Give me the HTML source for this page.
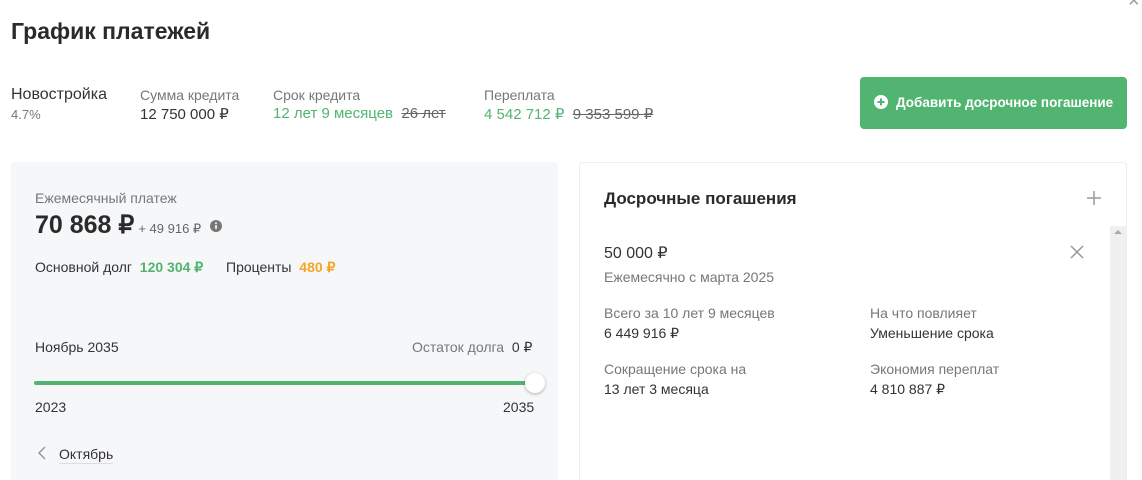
<!DOCTYPE html>
<html><head><meta charset="utf-8"><style>
*{margin:0;padding:0;box-sizing:border-box}
html,body{width:1142px;height:480px;overflow:hidden}
body{background:#fff;font-family:"Liberation Sans",sans-serif;color:#222;position:relative}
.a{position:absolute;white-space:nowrap}
.g{color:#52b471}.m{color:#777}.s{text-decoration:line-through;color:#666}
</style></head><body>
<div class="a" style="left:1128px;top:-10px;font-size:20px;color:#999">×</div>
<div class="a" style="left:11px;top:18px;font-size:23px;font-weight:bold;color:#2a2a2a">График платежей</div>

<div class="a" style="left:11px;top:86px;font-size:16px;color:#333">Новостройка</div>
<div class="a m" style="left:11px;top:107px;font-size:13px">4.7%</div>
<div class="a m" style="left:140px;top:87px;font-size:14px">Сумма кредита</div>
<div class="a" style="left:140px;top:105px;font-size:15px;color:#333">12 750 000 ₽</div>
<div class="a m" style="left:273px;top:87px;font-size:14px">Срок кредита</div>
<div class="a" style="left:273px;top:105px;font-size:15px"><span class="g">12 лет 9 месяцев</span>&nbsp; <span class="s">26 лет</span></div>
<div class="a m" style="left:484px;top:87px;font-size:14px">Переплата</div>
<div class="a" style="left:484px;top:105px;font-size:15px"><span class="g">4 542 712 ₽</span>&nbsp; <span class="s">9 353 599 ₽</span></div>

<div class="a" style="left:860px;top:77px;width:267px;height:52px;background:#52b471;border-radius:4px;color:#fff;font-size:13.5px;font-weight:bold;line-height:52px;padding-left:14px">
<svg width="14" height="14" viewBox="0 0 14 14" style="vertical-align:-2px;margin-right:8px"><circle cx="7" cy="7" r="7" fill="#fff"/><path d="M7 3.5v7M3.5 7h7" stroke="#52b471" stroke-width="2"/></svg>Добавить досрочное погашение</div>

<div class="a" style="left:11px;top:162px;width:547px;height:340px;background:#f6f7f9;border-radius:4px"></div>
<div class="a m" style="left:35px;top:190px;font-size:14px">Ежемесячный платеж</div>
<div class="a" style="left:35px;top:210px;font-size:25px;font-weight:bold;color:#2a2a2a">70 868 ₽<span style="font-size:13px;font-weight:normal;color:#666;margin-left:4px">+ 49 916 ₽</span></div>
<svg class="a" style="left:210px;top:220px" width="12" height="12" viewBox="0 0 12 12"><circle cx="6" cy="6" r="6" fill="#777"/><path d="M6 5v4" stroke="#fff" stroke-width="1.6"/><circle cx="6" cy="3.2" r="0.9" fill="#fff"/></svg>
<div class="a" style="left:35px;top:259px;font-size:14px;color:#333">Основной долг&nbsp; <b class="g">120 304 ₽</b></div>
<div class="a" style="left:226px;top:259px;font-size:14px;color:#333">Проценты&nbsp; <b style="color:#f5a623">480 ₽</b></div>

<div class="a" style="left:35px;top:339px;font-size:14px;color:#333">Ноябрь 2035</div>
<div class="a m" style="left:412px;top:339px;font-size:14px">Остаток долга&nbsp; <span style="color:#333">0 ₽</span></div>
<div class="a" style="left:34px;top:381px;width:500px;height:4px;background:#52b471;border-radius:2px"></div>
<div class="a" style="left:525px;top:373px;width:20px;height:20px;border-radius:50%;background:#fff;box-shadow:0 1px 3px rgba(0,0,0,.3)"></div>
<div class="a" style="left:35px;top:399px;font-size:14px;color:#333">2023</div>
<div class="a" style="left:503px;top:399px;font-size:14px;color:#333">2035</div>
<svg class="a" style="left:37px;top:446px" width="10" height="14" viewBox="0 0 10 14"><path d="M8 1L2 7l6 6" stroke="#999" stroke-width="1.5" fill="none"/></svg>
<div class="a" style="left:59px;top:446px;font-size:14px;border-bottom:1px solid #ddd;line-height:17px;color:#333">Октябрь</div>

<div class="a" style="left:579px;top:162px;width:548px;height:340px;border:1px solid #eee;border-radius:4px"></div>
<div class="a" style="left:604px;top:189px;font-size:17px;font-weight:bold;color:#2a2a2a">Досрочные погашения</div>
<svg class="a" style="left:1086px;top:190px" width="16" height="16" viewBox="0 0 16 16"><path d="M8 1v14M1 8h14" stroke="#999" stroke-width="1.5"/></svg>
<div class="a" style="left:1110px;top:226px;width:16px;height:270px;background:#f0f0f0"></div>
<div class="a" style="left:1114px;top:230px;width:0;height:0;border-left:4px solid transparent;border-right:4px solid transparent;border-bottom:4px solid #aaa"></div>
<div class="a" style="left:604px;top:243px;font-size:16px;color:#333">50 000 ₽</div>
<svg class="a" style="left:1070px;top:245px" width="14" height="14" viewBox="0 0 14 14"><path d="M1 1l12 12M13 1L1 13" stroke="#999" stroke-width="1.5"/></svg>
<div class="a m" style="left:604px;top:269px;font-size:14px">Ежемесячно с марта 2025</div>
<div class="a m" style="left:604px;top:305px;font-size:14px">Всего за 10 лет 9 месяцев</div>
<div class="a" style="left:604px;top:325px;font-size:14px;color:#333">6 449 916 ₽</div>
<div class="a m" style="left:870px;top:305px;font-size:14px">На что повлияет</div>
<div class="a" style="left:870px;top:325px;font-size:14px;color:#333">Уменьшение срока</div>
<div class="a m" style="left:604px;top:361px;font-size:14px">Сокращение срока на</div>
<div class="a" style="left:604px;top:381px;font-size:14px;color:#333">13 лет 3 месяца</div>
<div class="a m" style="left:870px;top:361px;font-size:14px">Экономия переплат</div>
<div class="a" style="left:870px;top:381px;font-size:14px;color:#333">4 810 887 ₽</div>
</body></html>
